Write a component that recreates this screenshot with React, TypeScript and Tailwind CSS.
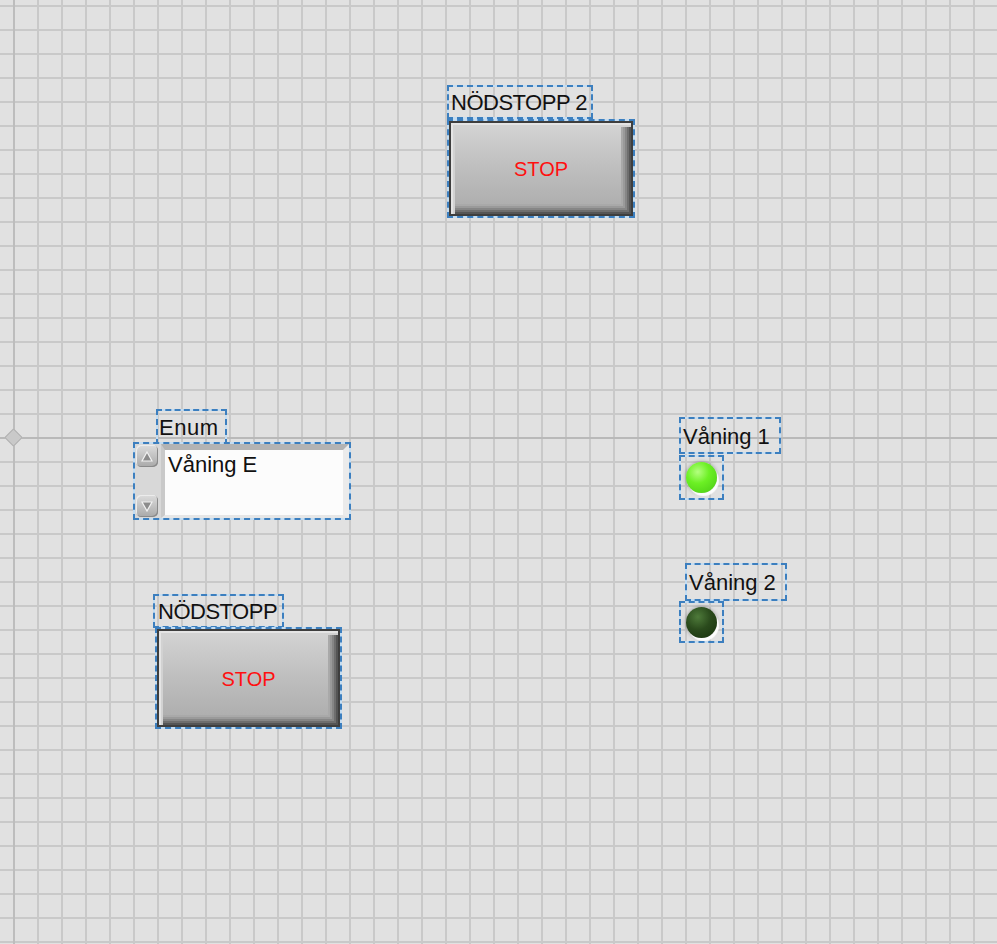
const font = "font-['Liberation_Sans',Arial,sans-serif]"

// selection frame used around every object on the panel
const sel = "border-2 border-[#c4ddf2] outline-2 outline-dashed outline-[#3c7fbf] -outline-offset-2"

function Label({ text, className }: { text: string, className: string }) {
    return (
        <div className={`flex items-center pl-[1px] pt-[1px] text-[22px] text-[#111] ${font} ${sel} ${className}`}>
            {text}
        </div>
    )
}

function StopButton({ className }: { className: string }) {
    return (
        <div className={`${sel} ${className}`}>
            <div className="flex h-full w-full items-center justify-center border-2 border-[#3e3e3e] bg-[linear-gradient(to_bottom,#d4d4d4,#bebebe_50%,#ababab)] shadow-[inset_2px_2px_0_#e4e4e4,inset_4px_4px_0_#d2d2d2,inset_-2px_-2px_0_#555,inset_-4px_-4px_0_#6e6e6e,inset_-6px_-6px_0_#868686,inset_-8px_-8px_0_#9a9a9a,inset_-10px_-10px_0_#a9a9a9]">
                <span className={`pt-[1px] text-[20px] text-[#ff1010] ${font}`}>STOP</span>
            </div>
        </div>
    )
}

function Led({ on, className }: { on: boolean, className: string }) {
    return (
        <div className={`flex items-center justify-center ${sel} ${className}`}>
            <div
                className={`h-[31px] w-[31px] rounded-full shadow-[2px_3px_1px_rgba(255,255,255,0.95),0_0_4px_rgba(0,0,0,0.35)] ${on
                    ? "bg-[radial-gradient(circle_at_38%_32%,#b4ff80,#6cf024_40%,#48c814_100%)]"
                    : "bg-[radial-gradient(circle_at_38%_32%,#4e7a3a,#2a4a1c_45%,#16300c_100%)]"}`}
            />
        </div>
    )
}

function ArrowBtn({ up }: { up: boolean }) {
    return (
        <div className="flex h-[22px] w-[22px] items-center justify-center rounded-[5px] bg-[linear-gradient(to_bottom,#dcdcdc,#a9a9a9)] shadow-[inset_1px_1px_0_#ececec,inset_-1px_-1px_0_#8a8a8a]">
            <svg width="12" height="11" viewBox="0 0 12 11">
                {up
                    ? <path d="M6 1 L11 10 L1 10 Z" fill="#8c8c8c" stroke="#f2f2f2" strokeWidth="1.2" />
                    : <path d="M1 1 L11 1 L6 10 Z" fill="#8c8c8c" stroke="#f2f2f2" strokeWidth="1.2" />}
            </svg>
        </div>
    )
}

function EnumControl({ className }: { className: string }) {
    return (
        <div className={`flex ${sel} ${className}`}>
            <div className="flex w-[26px] flex-col justify-between bg-[#d8d8d8] py-[1px] pl-[1px]">
                <ArrowBtn up />
                <ArrowBtn up={false} />
            </div>
            <div className="flex-1 border-t-[6px] border-r-[6px] border-b-[3px] border-l-[4px] border-t-[#b3b3b3] border-r-[#ebebeb] border-b-[#e6e6e6] border-l-[#c9c9c9] bg-[#fcfcfc]">
                <div className={`pl-[3px] pt-[3px] text-[22px] leading-[24px] text-[#111] ${font}`}>Våning E</div>
            </div>
        </div>
    )
}

// one front panel object: its label stacked over the control, placed on the canvas
function Node({ className, children }: { className: string, children: React.ReactNode }) {
    return <div className={`absolute flex flex-col items-start ${className}`}>{children}</div>
}

export default function App() {
    return (
        <div className="relative h-[944px] w-[997px] overflow-hidden bg-[#e1e1e1] bg-[linear-gradient(to_right,#c9c9c9_2px,transparent_2px),linear-gradient(to_bottom,#c9c9c9_2px,transparent_2px)] bg-[size:24px_24px] bg-[position:13px_5px]">
            {/* origin lines */}
            <div className="absolute left-0 top-[437px] h-[2px] w-full bg-[#b9b9b9]" />
            <div className="absolute left-[13px] top-0 h-full w-[2px] bg-[#bdbdbd]" />
            <div className="absolute left-[7px] top-[431px] h-[13px] w-[13px] rotate-45 border border-[#b2b2b2] bg-[#c9c9c9]" />

            <Node className="left-[447px] top-[85px]">
                <Label text="NÖDSTOPP 2" className="h-[34px] w-[146px] pl-[2px] tracking-[-0.5px]" />
                <StopButton className="h-[99px] w-[188px]" />
            </Node>

            <Node className="left-[133px] top-[409px]">
                <Label text="Enum" className="ml-[23px] -mb-[3px] h-[36px] w-[71px] tracking-[0.5px]" />
                <EnumControl className="h-[78px] w-[218px]" />
            </Node>

            <Node className="left-[153px] top-[594px]">
                <Label text="NÖDSTOPP" className="-mb-[1px] h-[34px] w-[131px] pl-[3px] tracking-[-0.5px]" />
                <StopButton className="ml-[2px] h-[102px] w-[187px]" />
            </Node>

            <Node className="left-[679px] top-[417px]">
                <Label text="Våning 1" className="mb-[1px] h-[37px] w-[102px] pl-[2px]" />
                <Led on className="h-[45px] w-[45px]" />
            </Node>

            <Node className="left-[679px] top-[563px]">
                <Label text="Våning 2" className="ml-[6px] h-[38px] w-[102px] pl-[2px]" />
                <Led on={false} className="h-[42px] w-[45px]" />
            </Node>
        </div>
    )
}
